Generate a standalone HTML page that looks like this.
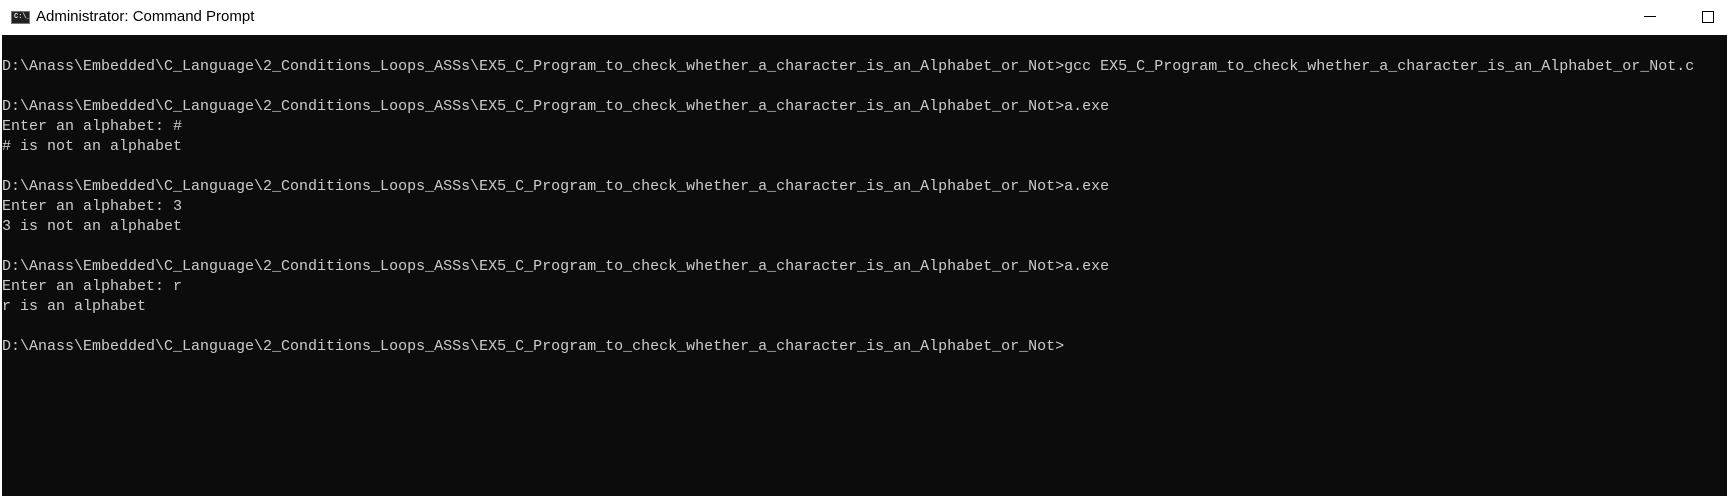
<!DOCTYPE html>
<html><head><style>
html,body{margin:0;padding:0;width:1727px;height:496px;overflow:hidden;background:#0c0c0c}
.title{position:absolute;left:0;top:0;width:1727px;height:35px;background:#fff}
.title span{position:absolute;left:36px;top:8px;font:15px "Liberation Sans",sans-serif;color:#000}
.icon{position:absolute;left:11px;top:11px;width:19px;height:13px;background:#222;border:1px solid #777;box-sizing:border-box}
.icon i{position:absolute;left:2px;top:1px;font:bold 7px "Liberation Mono",monospace;color:#ddd;font-style:normal}
.min{position:absolute;left:1644px;top:16px;width:12px;height:1px;background:#000}
.max{position:absolute;left:1702px;top:11px;width:10px;height:10px;border:1px solid #000}
.lb{position:absolute;left:0;top:35px;width:2px;height:461px;background:#fff}
pre{position:absolute;left:2px;top:57px;margin:0;font:15px/20px "Liberation Mono",monospace;color:#cccccc}
</style></head><body>
<div class="title"><div class="icon"><i>C:\_</i></div><span>Administrator: Command Prompt</span><div class="min"></div><div class="max"></div></div>
<div class="lb"></div>
<pre>D:\Anass\Embedded\C_Language\2_Conditions_Loops_ASSs\EX5_C_Program_to_check_whether_a_character_is_an_Alphabet_or_Not>gcc EX5_C_Program_to_check_whether_a_character_is_an_Alphabet_or_Not.c

D:\Anass\Embedded\C_Language\2_Conditions_Loops_ASSs\EX5_C_Program_to_check_whether_a_character_is_an_Alphabet_or_Not>a.exe
Enter an alphabet: #
# is not an alphabet

D:\Anass\Embedded\C_Language\2_Conditions_Loops_ASSs\EX5_C_Program_to_check_whether_a_character_is_an_Alphabet_or_Not>a.exe
Enter an alphabet: 3
3 is not an alphabet

D:\Anass\Embedded\C_Language\2_Conditions_Loops_ASSs\EX5_C_Program_to_check_whether_a_character_is_an_Alphabet_or_Not>a.exe
Enter an alphabet: r
r is an alphabet

D:\Anass\Embedded\C_Language\2_Conditions_Loops_ASSs\EX5_C_Program_to_check_whether_a_character_is_an_Alphabet_or_Not>
</pre>
</body></html>
